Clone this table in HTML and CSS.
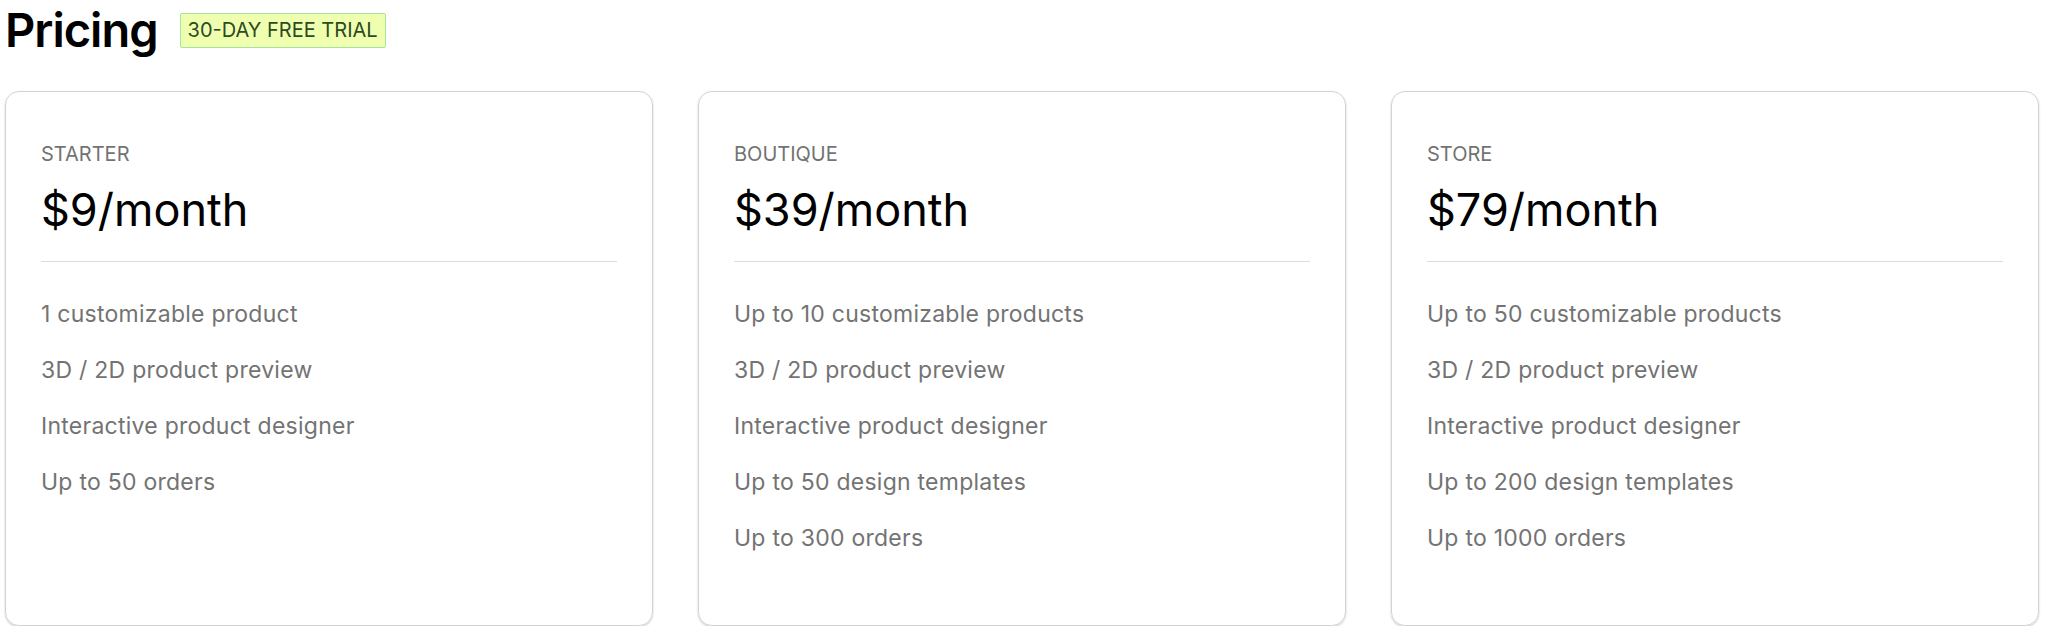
FILE: index.html
```html
<!DOCTYPE html>
<html lang="en">
<head>
    <meta charset="UTF-8">
    <meta name="viewport" content="width=device-width, initial-scale=1.0">
    <title>Pricing</title>
    <link rel="stylesheet" href="styles.css">
</head>
<body>
    <div class="page">
        <div class="page-header">
            <h1 class="page-title">Pricing</h1>
            <span class="trial-badge">30-DAY FREE TRIAL</span>
        </div>

        <div class="plans">
            <div class="plan-card">
                <div class="plan-name">STARTER</div>
                <div class="plan-price">$9/month</div>
                <ul class="plan-features">
                    <li>1 customizable product</li>
                    <li>3D / 2D product preview</li>
                    <li>Interactive product designer</li>
                    <li>Up to 50 orders</li>
                </ul>
            </div>

            <div class="plan-card">
                <div class="plan-name">BOUTIQUE</div>
                <div class="plan-price">$39/month</div>
                <ul class="plan-features">
                    <li>Up to 10 customizable products</li>
                    <li>3D / 2D product preview</li>
                    <li>Interactive product designer</li>
                    <li>Up to 50 design templates</li>
                    <li>Up to 300 orders</li>
                </ul>
            </div>

            <div class="plan-card">
                <div class="plan-name">STORE</div>
                <div class="plan-price">$79/month</div>
                <ul class="plan-features">
                    <li>Up to 50 customizable products</li>
                    <li>3D / 2D product preview</li>
                    <li>Interactive product designer</li>
                    <li>Up to 200 design templates</li>
                    <li>Up to 1000 orders</li>
                </ul>
            </div>
        </div>
    </div>
</body>
</html>
```

FILE: styles.css
```css
:root {
    --text-color: #000;
    --muted-color: #737373;
    --border-color: #d3d3d3;
    --badge-bg: #efffb0;
    --badge-border: #a8e4a0;
    --badge-text: #2e4a1f;
}

* {
    box-sizing: border-box;
    margin: 0;
    padding: 0;
}

body {
    font-family: Inter, 'Noto Sans', sans-serif;
    color: var(--text-color);
    background-color: #fff;
}

.page {
    padding: 1px 9px 0 5px;
}

.page-header {
    display: flex;
    align-items: center;
    gap: 22px;
    margin-bottom: 32px;
}

.page-title {
    font-size: 47px;
    font-weight: 600;
    line-height: 58px;
    letter-spacing: -1px;
}

.trial-badge {
    display: inline-block;
    padding: 0 7px;
    height: 35px;
    line-height: 33px;
    font-size: 20px;
    color: var(--badge-text);
    background-color: var(--badge-bg);
    border: 1px solid var(--badge-border);
    border-radius: 2px;
}

.plans {
    display: grid;
    grid-template-columns: repeat(3, 1fr);
    gap: 45px;
}

.plan-card {
    border: 1px solid var(--border-color);
    border-radius: 14px;
    box-shadow: 0 1px 2px rgba(0, 0, 0, 0.22);
    padding: 50px 35px 71px;
}

.plan-name {
    font-size: 20px;
    line-height: 24px;
    color: var(--muted-color);
}

.plan-price {
    margin-top: 17px;
    font-size: 45px;
    line-height: 54px;
    padding-bottom: 24px;
    border-bottom: 1px solid #dcdcdc;
}

.plan-features {
    list-style: none;
    margin-top: 36px;
    display: flex;
    flex-direction: column;
    gap: 24px;
}

.plan-features li {
    font-size: 23px;
    line-height: 32px;
    letter-spacing: 0.25px;
    color: var(--muted-color);
}
```
